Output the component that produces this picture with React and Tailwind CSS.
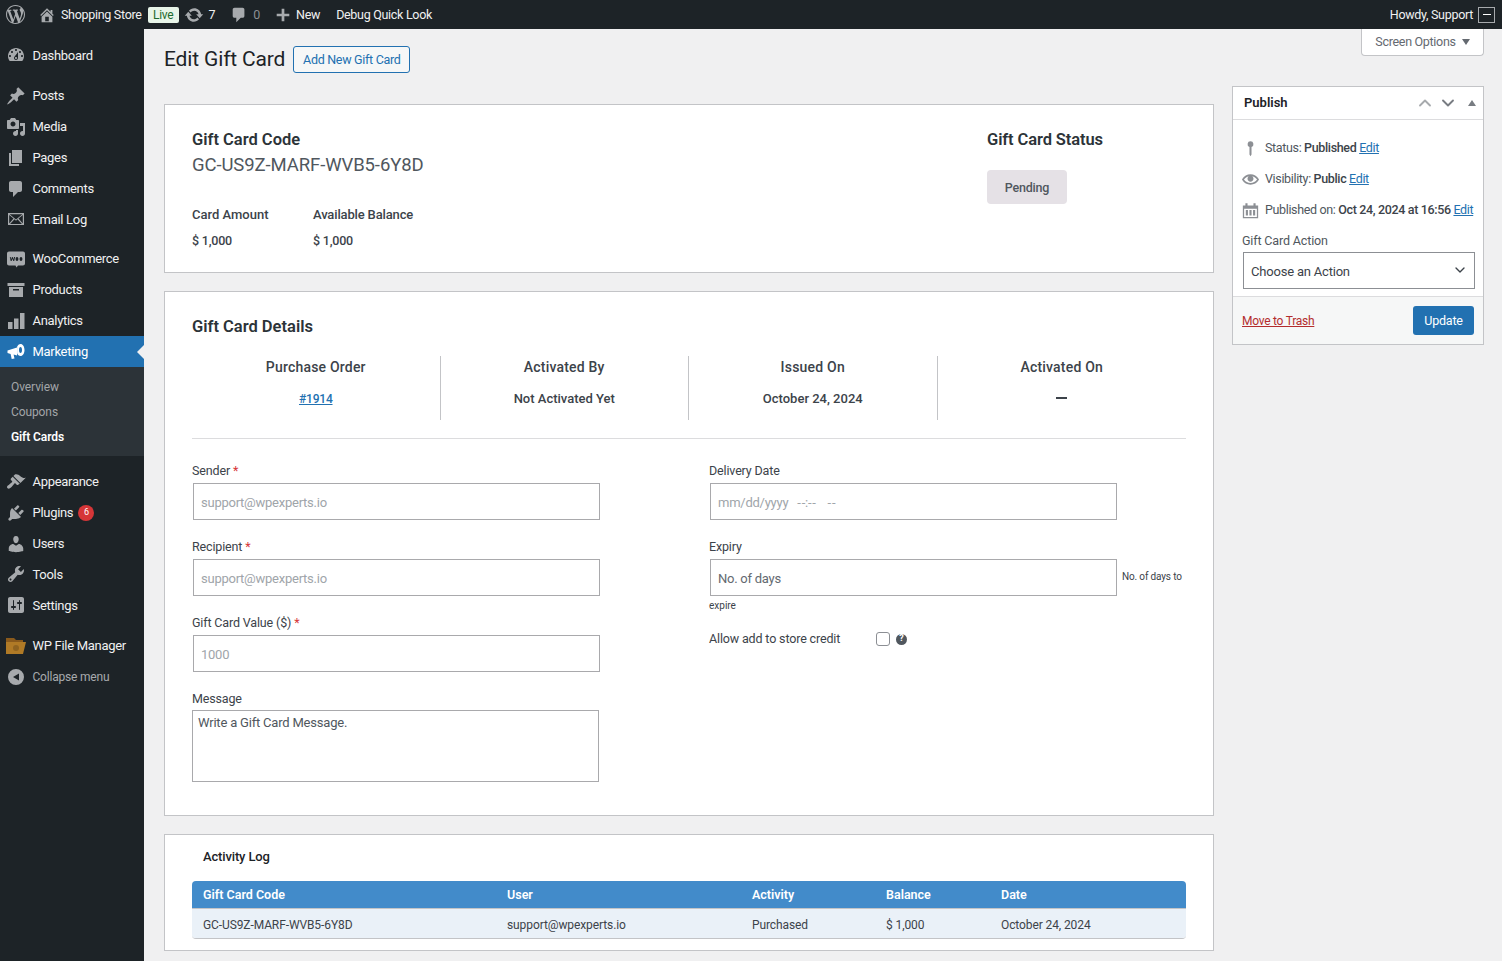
import React from 'react';
import { ChevronUp, ChevronDown } from 'lucide-react';

// dashicons style glyphs, 20x20 box
const paths = {
  wp: 'M20 10c0-5.51-4.49-10-10-10C4.48 0 0 4.49 0 10c0 5.52 4.48 10 10 10 5.51 0 10-4.48 10-10zM7.78 15.37L4.37 6.22c.55-.02 1.17-.08 1.17-.08.5-.06.44-1.13-.06-1.11 0 0-1.45.11-2.37.11-.18 0-.37 0-.58-.01C4.12 2.69 6.87 1.07 10 1.07c2.33 0 4.45.87 6.05 2.34-.68-.11-1.65.39-1.65 1.58 0 .74.45 1.36.9 2.1.35.61.55 1.36.55 2.46 0 1.49-1.4 5-1.4 5l-3.03-8.37c.54-.02.82-.17.82-.17.5-.05.44-1.25-.06-1.22 0 0-1.44.12-2.38.12-.87 0-2.33-.12-2.33-.12-.5-.03-.56 1.2-.06 1.22l.92.08 1.26 3.41zM17.41 10c.24-.64.74-1.87.43-4.25.7 1.29 1.05 2.71 1.05 4.25 0 3.29-1.73 6.24-4.4 7.78.97-2.59 1.94-5.2 2.92-7.78zM6.1 18.09C3.12 16.65 1.11 13.53 1.11 10c0-1.3.23-2.48.72-3.59C3.25 10.3 4.67 14.2 6.1 18.09zm4.03-6.63l2.58 6.98c-.86.29-1.76.45-2.71.45-.79 0-1.57-.11-2.29-.33.81-2.38 1.62-4.74 2.42-7.1z',
  home: 'M16 8.5l1.53 1.53-1.06 1.06L10 4.62l-6.47 6.47-1.06-1.06L10 2.5l4 4v-2h2v4zm-6-2.46l6 5.99V18H4v-5.97zM12 17v-5H8v5h4z',
  update: 'M10.2 3.28c3.53 0 6.43 2.61 6.92 6h2.08l-3.5 4-3.5-4h2.32c-.45-1.97-2.21-3.44-4.32-3.44-1.45 0-2.73.71-3.54 1.78L4.95 5.66C6.23 4.2 8.11 3.28 10.2 3.28zm-.4 13.44c-3.52 0-6.43-2.61-6.92-6H.8l3.5-4c1.17 1.33 2.33 2.67 3.5 4H5.48c.45 1.97 2.21 3.44 4.32 3.44 1.45 0 2.73-.71 3.54-1.78l1.71 1.95c-1.28 1.46-3.15 2.39-5.25 2.39z',
  comment: 'M5 2h9c1.1 0 2 .9 2 2v7c0 1.1-.9 2-2 2h-2l-5 5v-5H5c-1.1 0-2-.9-2-2V4c0-1.1.9-2 2-2z',
  plus: 'M17 8.5v3h-5.5V17h-3v-5.5H3v-3h5.5V3h3v5.5H17z',
  dashboard: 'M3.76 16h12.48c1.1-1.37 1.76-3.11 1.76-5 0-4.42-3.58-8-8-8s-8 3.58-8 8c0 1.89.66 3.63 1.76 5zM10 4c.55 0 1 .45 1 1s-.45 1-1 1-1-.45-1-1 .45-1 1-1zM6 6c.55 0 1 .45 1 1s-.45 1-1 1-1-.45-1-1 .45-1 1-1zm8 0c.55 0 1 .45 1 1s-.45 1-1 1-1-.45-1-1 .45-1 1-1zm-5.37 5.55L12 7v6c0 1.1-.9 2-2 2s-2-.9-2-2c0-.57.24-1.08.63-1.45zM4 10c.55 0 1 .45 1 1s-.45 1-1 1-1-.45-1-1 .45-1 1-1zm12 0c.55 0 1 .45 1 1s-.45 1-1 1-1-.45-1-1 .45-1 1-1zm-5 3c0-.55-.45-1-1-1s-1 .45-1 1 .45 1 1 1 1-.45 1-1z',
  post: 'M10.44 3.02l1.82-1.82 6.36 6.35-1.83 1.82c-1.05-.68-2.48-.57-3.41.36l-.75.75c-.92.93-1.04 2.35-.35 3.41l-1.83 1.82-2.41-2.41-2.8 2.79c-.42.42-3.38 2.71-3.8 2.29s1.86-3.39 2.28-3.81l2.79-2.79L4.1 9.36l1.83-1.82c1.05.69 2.48.57 3.4-.36l.75-.75c.93-.92 1.05-2.35.36-3.41z',
  media: 'M13 11V4c0-.55-.45-1-1-1h-1.67L9 1H5L3.67 3H2c-.55 0-1 .45-1 1v7c0 .55.45 1 1 1h10c.55 0 1-.45 1-1zM7 4.5c1.38 0 2.5 1.12 2.5 2.5S8.38 9.5 7 9.5 4.5 8.38 4.5 7 5.62 4.5 7 4.5zM14 6h5v10.5c0 1.38-1.12 2.5-2.5 2.5S14 17.88 14 16.5s1.12-2.5 2.5-2.5c.17 0 .34.02.5.05V9h-3V6zm-4 8.05V13h2v3.5c0 1.38-1.12 2.5-2.5 2.5S7 17.88 7 16.5 8.12 14 9.5 14c.17 0 .34.02.5.05z',
  page: 'M6 15V2h10v13H6zm-1 1h8v2H3V5h2v11z',
  mail: 'M2 4h16v12H2V4zm1.6 1.2L10 10.4l6.4-5.2H3.6zM3.2 6v8.6l4.3-5.1L3.2 6zm.9 9h11.8l-4.4-4.8L10 11.8l-1.5-1.6L4.1 15zm8.4-5.5l4.3 5.1V6l-4.3 3.5z',
  woo: 'M3 2.5h14c1.1 0 2 .9 2 2v10c0 1.1-.9 2-2 2h-5l-1.5 2-1-2H3c-1.1 0-2-.9-2-2v-10c0-1.1.9-2 2-2zm.8 5.5l.9 4h.9l.9-2.3.8 2.3h.9l.9-4H8l-.5 2.4L6.7 8H6l-.9 2.4L4.7 8h-.9zm7.2 0c-.9 0-1.4.9-1.4 2s.5 2 1.4 2 1.4-.9 1.4-2-.5-2-1.4-2zm4 0c-.9 0-1.4.9-1.4 2s.5 2 1.4 2 1.4-.9 1.4-2-.5-2-1.4-2z',
  products: 'M1.5 3h17v3h-17V3zM3 7h14v10H3V7zm4 2v1.5h6V9H7z',
  analytics: 'M2 11h4.5v7H2v-7zm6-3.5h4.5V18H8V7.5zM14 2h4.5v16H14V2z',
  marketing: 'M1.5 8.5L11 5.5v8l-3.4-.9.9 3.9-2.8.6-1.1-5.2-3.1-.8V8.5zM14.5 2c2.3 0 4 2.6 4 6s-1.7 6-4 6c-1.5 0-2.7-1.1-3.4-2.8V4.8C11.8 3.1 13 2 14.5 2zm0 3c-.9 0-1.5 1.3-1.5 3s.6 3 1.5 3 1.5-1.3 1.5-3-.6-3-1.5-3z',
  appearance: 'M14.48 11.06L7.41 3.99l1.5-1.5c.5-.56 2.3-.47 3.51.32 1.21.8 1.43 1.28 2.91 2.1 1.18.64 2.45 1.26 4.45.85zm-.71.71L6.7 4.7 4.93 6.47c-.39.39-.39 1.02 0 1.41l1.06 1.06c.39.39.39 1.03 0 1.42-.6.6-1.43 1.11-2.21 1.69-.35.26-.7.53-1.01.84C1.43 13.23.4 14.93 1.4 15.94c.1.1.2.2.3.3 1 .99 2.7-.05 4.04-1.38.31-.31.58-.66.84-1.01.58-.78 1.09-1.61 1.69-2.21.39-.39 1.03-.39 1.42 0l1.06 1.06c.39.39 1.02.39 1.41 0z',
  plugins: 'M13.11 4.36L9.87 7.6 8 5.73l3.24-3.24c.35-.34 1.05-.2 1.56.32.52.51.66 1.21.31 1.55zm-8 1.77l.91-1.12 9.01 9.01-1.19.84c-.71.71-2.63 1.16-3.82 1.16H6.14L4.9 17.26c-.59.59-1.54.59-2.12 0-.59-.58-.59-1.53 0-2.12l1.24-1.24v-3.88c0-1.13.4-3.19 1.09-3.89zm7.26 3.97l3.24-3.24c.34-.35 1.04-.21 1.55.31.52.51.66 1.21.31 1.55l-3.24 3.25z',
  users: 'M10 9.25c-2.27 0-2.73-3.44-2.73-3.44C7 4.02 7.82 2 9.97 2c2.16 0 2.98 2.02 2.71 3.81 0 0-.41 3.44-2.68 3.44zm0 2.57L12.72 10c2.39 0 4.52 2.33 4.52 4.53v2.49s-3.65 1.13-7.24 1.13c-3.65 0-7.24-1.13-7.24-1.13v-2.49c0-2.25 1.94-4.48 4.47-4.48z',
  tools: 'M16.68 9.77c-1.34 1.34-3.3 1.67-4.95.99l-5.41 6.52c-.99.99-2.59.99-3.58 0s-.99-2.59 0-3.57l6.52-5.42c-.68-1.65-.35-3.61.99-4.95 1.28-1.28 3.12-1.62 4.72-1.06l-2.89 2.89 2.82 2.82 2.86-2.87c.53 1.58.18 3.39-1.08 4.65zM3.81 16.21c.4.39 1.04.39 1.43 0 .4-.4.4-1.04 0-1.43-.39-.4-1.03-.4-1.43 0-.39.39-.39 1.03 0 1.43z',
  settings: 'M18 16V4c0-1.1-.9-2-2-2H4c-1.1 0-2 .9-2 2v12c0 1.1.9 2 2 2h12c1.1 0 2-.9 2-2zM8 11h1c.55 0 1 .45 1 1s-.45 1-1 1H8v1.5c0 .28-.22.5-.5.5s-.5-.22-.5-.5V13H6c-.55 0-1-.45-1-1s.45-1 1-1h1V5.5c0-.28.22-.5.5-.5s.5.22.5.5V11zm5-2h-1c-.55 0-1-.45-1-1s.45-1 1-1h1V5.5c0-.28.22-.5.5-.5s.5.22.5.5V7h1c.55 0 1 .45 1 1s-.45 1-1 1h-1v5.5c0 .28-.22.5-.5.5s-.5-.22-.5-.5V9z',
  collapse: 'M10 2a8 8 0 1 1 0 16 8 8 0 0 1 0-16zm3 4.5L7 10l6 3.5v-7z',
  eye: 'M19.7 9.4C17.7 6 14 3.9 10 3.9S2.3 6 .3 9.4L0 10l.3.6c2 3.4 5.7 5.5 9.7 5.5s7.7-2.1 9.7-5.5l.3-.6-.3-.6zM10 14.1c-3.1 0-6-1.6-7.7-4.1C3.6 8 5.7 6.6 8 6.1c-.9.6-1.5 1.7-1.5 2.9 0 1.9 1.6 3.5 3.5 3.5s3.5-1.6 3.5-3.5c0-1.2-.6-2.3-1.5-2.9 2.3.5 4.4 1.9 5.7 3.9-1.7 2.5-4.6 4.1-7.7 4.1z',
  pin: 'M10 1.5a3.4 3.4 0 0 1 1.2 6.6V17l-1.2 2-1.2-2V8.1A3.4 3.4 0 0 1 10 1.5z',
  calendar: 'M4 1.5h2.5V4h7V1.5H16V4h3v15H1V4h3V1.5zM2.5 8v9.5h15V8h-15zM4.5 9.5h2.5v6.5H4.5V9.5zm4.25 0h2.5v6.5h-2.5V9.5zm4.25 0h2.5v6.5H13V9.5z',
};

const Dash = ({ name, className }) => (
  <svg viewBox="0 0 20 20" className={className} fill="currentColor" fillRule="evenodd" aria-hidden="true">
    <path d={paths[name]} />
  </svg>
);

const Row = ({ icon, label, children }) => (
  <div className="flex items-center h-[30.8px] text-[#f0f0f1]">
    <Dash name={icon} className="w-5 h-5 ml-[6px] mr-[6.5px] text-[#a7aaad] shrink-0" />
    <span>{label}</span>
    {children}
  </div>
);

const FolderIcon = () => (
  <svg viewBox="0 0 22 18" className="w-[22px] h-[18px] ml-[5px] mr-[5.5px] shrink-0" aria-hidden="true">
    <path d="M1 1h8l2 2h7v3H1z" fill="#8a5a1c" />
    <path d="M1 5h20l-3 12H1z" fill="#b07a26" />
    <circle cx="11" cy="11" r="3" fill="#8f6320" />
  </svg>
);

const Sidebar = () => (
  <aside className="w-[144px] shrink-0 bg-[#1d2327] text-[13px] tracking-[-0.3px]">
    <div className="pt-[11px]">
      <Row icon="dashboard" label="Dashboard" />
    </div>
    <div className="mt-[10px]">
      <Row icon="post" label="Posts" />
      <Row icon="media" label="Media" />
      <Row icon="page" label="Pages" />
      <Row icon="comment" label="Comments" />
      <Row icon="mail" label="Email Log" />
    </div>
    <div className="mt-[9px]">
      <Row icon="woo" label="WooCommerce" />
      <Row icon="products" label="Products" />
      <Row icon="analytics" label="Analytics" />
      <div className="relative flex items-center h-[31px] bg-[#2271b1] text-white">
        <Dash name="marketing" className="w-5 h-5 ml-[6px] mr-[6.5px] shrink-0" />
        <span>Marketing</span>
        <span className="absolute right-0 top-[9px] border-y-[7px] border-r-[7px] border-y-transparent border-r-[#f0f0f1]" />
      </div>
      <div className="bg-[#2c3338] pt-[7px] pb-[7px] text-[12px] tracking-[-0.1px]">
        <div className="h-[25px] flex items-center pl-[11px] text-[#c3c4c7cc]">Overview</div>
        <div className="h-[25px] flex items-center pl-[11px] text-[#c3c4c7cc]">Coupons</div>
        <div className="h-[25px] flex items-center pl-[11px] text-white font-semibold">Gift Cards</div>
      </div>
    </div>
    <div className="mt-[10.5px]">
      <Row icon="appearance" label="Appearance" />
      <Row icon="plugins" label="Plugins">
        <span className="ml-[5px] w-4 h-4 rounded-full bg-[#d63638] text-white text-[9px] flex items-center justify-center">6</span>
      </Row>
      <Row icon="users" label="Users" />
      <Row icon="tools" label="Tools" />
      <Row icon="settings" label="Settings" />
    </div>
    <div className="mt-[10px]">
      <div className="flex items-center h-[30.8px] text-[#f0f0f1]">
        <FolderIcon />
        <span>WP File Manager</span>
      </div>
      <div className="flex items-center h-[32px] text-[#a7aaad] text-[12px] tracking-[-0.2px]">
        <Dash name="collapse" className="w-5 h-5 ml-[6px] mr-[6.5px] shrink-0" />
        <span>Collapse menu</span>
      </div>
    </div>
  </aside>
);

const TopBar = () => (
  <header className="h-[29px] shrink-0 bg-[#1d2327] flex items-center text-[12.5px] tracking-[-0.3px] text-[#f0f0f1]">
    <Dash name="wp" className="w-[19px] h-[19px] ml-[6px] text-[#a7aaad]" />
    <Dash name="home" className="w-[18px] h-[18px] ml-[13px] text-[#a7aaad]" />
    <span className="ml-[5px] pt-px">Shopping Store</span>
    <span className="ml-[6px] w-[31px] h-[16px] rounded-[2px] bg-[#e8f5e9] text-[#1e6b2e] text-[12px] flex items-center justify-center">Live</span>
    <Dash name="update" className="w-[20px] h-[20px] ml-[5px] text-[#a7aaad]" />
    <span className="ml-[5px] pt-px">7</span>
    <Dash name="comment" className="w-[18px] h-[18px] ml-[15px] text-[#a7aaad]" />
    <span className="ml-[5px] pt-px text-[#8c8f94]">0</span>
    <Dash name="plus" className="w-[18px] h-[18px] ml-[14px] text-[#a7aaad]" />
    <span className="ml-[4px] pt-px">New</span>
    <span className="ml-[16px] pt-px">Debug Quick Look</span>
    <span className="ml-auto pt-px">Howdy, Support</span>
    <span className="ml-[5px] mr-[7px] w-[17px] h-[16px] border border-[#a7aaad] flex items-center justify-center">
      <span className="w-[8px] h-px bg-white" />
    </span>
  </header>
);

const Card = ({ className, children }) => (
  <section className={`bg-white border border-[#c3c4c7] ${className}`}>{children}</section>
);

const Field = ({ label, required, placeholder, className = '' }) => (
  <div className={className}>
    <div className="text-[12.5px] tracking-[-0.15px] h-[18px] pt-px leading-[18px] text-[#3c434a]">
      {label}
      {required && <span className="text-[#d63638]"> *</span>}
    </div>
    <input
      readOnly
      placeholder={placeholder}
      className="mt-[4px] ml-px block w-[407px] h-[37px] bg-white border border-[#a9a9ac] px-[7px] pt-px text-[13px] tracking-[-0.25px] placeholder:text-[#a0a5aa] outline-none"
    />
  </div>
);

const StatCol = ({ title, border, children }) => (
  <div className={`h-[64px] flex flex-col items-center pt-[1px] ${border ? 'border-r border-[#c3c4c7]' : ''}`}>
    <div className="h-[20px] leading-[20px] font-medium text-[#3c434a] text-[14px] tracking-[0.2px]">{title}</div>
    <div className="mt-[12px] h-[20px] leading-[20px] text-[#3c434a] text-[13px] font-medium">{children}</div>
  </div>
);

const GiftCardSummary = () => (
  <Card className="h-[169px] pl-[27px] pt-[24px] flex">
    <div className="w-[795px]">
      <h2 className="text-[16.5px] leading-[22px] font-semibold text-[#2c3338]">Gift Card Code</h2>
      <div className="mt-[2px] text-[18.5px] leading-[24px] tracking-[-0.1px] text-[#50575e]">GC-US9Z-MARF-WVB5-6Y8D</div>
      <div className="mt-[29px] flex text-[13px] text-[#3c434a]">
        <div className="w-[121px]">
          <div className="h-[18px] leading-[18px] font-medium">Card Amount</div>
          <div className="mt-[8px] h-[18px] leading-[18px] font-medium text-[12.5px] tracking-[-0.2px]">$ 1,000</div>
        </div>
        <div>
          <div className="h-[18px] leading-[18px] font-medium tracking-[-0.15px]">Available Balance</div>
          <div className="mt-[8px] h-[18px] leading-[18px] font-medium text-[12.5px] tracking-[-0.2px]">$ 1,000</div>
        </div>
      </div>
    </div>
    <div>
      <h2 className="text-[16.5px] leading-[22px] font-semibold tracking-[-0.1px] text-[#2c3338]">Gift Card Status</h2>
      <div className="mt-[19px] w-[80px] h-[34px] pt-[2px] rounded-[4px] bg-[#e5e1e6] text-[#50575e] text-[12.5px] tracking-[-0.2px] font-medium flex items-center justify-center">Pending</div>
    </div>
  </Card>
);

const GiftCardDetails = () => (
  <Card className="h-[525px] px-[27px] pt-[24px]">
    <h2 className="text-[16.5px] leading-[22px] font-semibold text-[#2c3338]">Gift Card Details</h2>
    <div className="mt-[18px] grid grid-cols-4 pb-[18px] border-b border-[#dcdcde]">
      <StatCol title="Purchase Order" border>
        <span className="text-[#2271b1] underline text-[12px] tracking-[-0.2px]">#1914</span>
      </StatCol>
      <StatCol title="Activated By" border>Not Activated Yet</StatCol>
      <StatCol title="Issued On" border>October 24, 2024</StatCol>
      <StatCol title="Activated On">
        <span className="block w-[11px] h-[2px] bg-[#3c434a] mt-[8px]" />
      </StatCol>
    </div>
    <div className="mt-[22px] flex">
      <div className="w-[517px]">
        <Field label="Sender" required placeholder="support@wpexperts.io" />
        <Field label="Recipient" required placeholder="support@wpexperts.io" className="mt-[17px]" />
        <Field label="Gift Card Value ($)" required placeholder="1000" className="mt-[17px]" />
        <div className="mt-[17px]">
          <div className="text-[12.5px] tracking-[-0.15px] h-[18px] pt-px leading-[18px] text-[#3c434a]">Message</div>
          <textarea
            readOnly
            placeholder="Write a Gift Card Message."
            className="block w-[407px] h-[72px] mt-[3px] border border-[#a9a9ac] px-[5px] py-[2px] text-[13px] tracking-[-0.2px] placeholder:text-[#50575e] outline-none resize-none"
          />
        </div>
      </div>
      <div className="flex-1">
        <Field label="Delivery Date" placeholder={'mm/dd/yyyy\u00a0\u00a0\u00a0-\u200a-:-\u200a-\u00a0\u00a0\u00a0\u00a0-\u200a-'} />
        <div className="mt-[17px]">
          <div className="text-[12.5px] tracking-[-0.15px] h-[18px] pt-px leading-[18px] text-[#3c434a]">Expiry</div>
          <div className="mt-[4px] flex items-center">
            <input
              readOnly
              placeholder="No. of days"
              className="ml-px block w-[407px] h-[37px] border border-[#a9a9ac] px-[7px] pt-px text-[13px] tracking-[-0.25px] placeholder:text-[#646970] outline-none"
            />
            <span className="ml-[5px] mb-[2px] text-[10px] tracking-[-0.15px] text-[#3c434a]">No. of days to</span>
          </div>
          <div className="mt-[3px] text-[10px] leading-[14px] text-[#3c434a]">expire</div>
        </div>
        <div className="mt-[17px] flex items-center h-[18px] text-[12.5px] tracking-[-0.15px] text-[#3c434a]">
          <span className="w-[167px]">Allow add to store credit</span>
          <input type="checkbox" className="w-[14px] h-[14px] appearance-none bg-white border border-[#8c8f94] rounded-[3px]" />
          <span className="ml-[6px] w-[11px] h-[11px] rounded-full bg-[#50575e] text-white text-[9px] font-bold flex items-center justify-center">?</span>
        </div>
      </div>
    </div>
  </Card>
);

const logCols = 'grid grid-cols-[304px_245px_134px_115px_1fr] pl-[11px] items-center';

const ActivityLog = () => (
  <Card className="h-[117px] px-[27px] pt-[12px]">
    <h3 className="ml-[11px] text-[13px] tracking-[-0.15px] leading-[20px] font-medium text-[#1d2327]">Activity Log</h3>
    <div className="mt-[14px] rounded-[4px] overflow-hidden border-b border-[#c3c4c7]">
      <div className={`${logCols} h-[28px] pt-[2px] text-[12.5px] bg-[#428bca] text-white font-semibold border-b border-[#c3c4c7]`}>
        <span>Gift Card Code</span>
        <span>User</span>
        <span>Activity</span>
        <span>Balance</span>
        <span>Date</span>
      </div>
      <div className={`${logCols} h-[29px] pt-[2px] text-[12px] tracking-[-0.1px] bg-[#eaf1f8] text-[#3c434a]`}>
        <span>GC-US9Z-MARF-WVB5-6Y8D</span>
        <span>support@wpexperts.io</span>
        <span>Purchased</span>
        <span>$ 1,000</span>
        <span>October 24, 2024</span>
      </div>
    </div>
  </Card>
);

const PublishLine = ({ icon, iconClass, children }) => (
  <div className="flex items-center h-[31px] text-[12.5px] tracking-[-0.35px] text-[#50575e] whitespace-nowrap">
    <span className="w-[23px] shrink-0 flex items-center justify-center -ml-[3px] mr-[3px]">
      <Dash name={icon} className={iconClass} />
    </span>
    <span>{children}</span>
  </div>
);

const PublishBox = () => (
  <Card className="mt-[30px] h-[259px] flex flex-col">
    <div className="h-[33px] shrink-0 border-b border-[#dcdcde] flex items-center pl-[11px] text-[#1d2327]">
      <span className="text-[13px] font-semibold">Publish</span>
      <ChevronUp className="ml-auto w-5 h-5 text-[#a7aaad]" strokeWidth={2.25} />
      <ChevronDown className="ml-[3px] w-5 h-5 text-[#787c82]" strokeWidth={2.25} />
      <span className="ml-[10px] mr-[7px] border-x-[4px] border-b-[6px] border-x-transparent border-b-[#787c82]" />
    </div>
    <div className="flex-1 px-[9px] pt-[13px]">
      <PublishLine icon="pin" iconClass="w-[17px] h-[17px] text-[#8c8f94]">
        Status: <b className="font-medium text-[#3c434a]">Published</b> <a className="text-[#2271b1] underline">Edit</a>
      </PublishLine>
      <PublishLine icon="eye" iconClass="w-[17px] h-[17px] text-[#8c8f94]">
        Visibility: <b className="font-medium text-[#3c434a]">Public</b> <a className="text-[#2271b1] underline">Edit</a>
      </PublishLine>
      <PublishLine icon="calendar" iconClass="w-[17px] h-[17px] text-[#8c8f94]">
        Published on: <b className="font-medium text-[#3c434a]">Oct 24, 2024 at 16:56</b> <a className="text-[#2271b1] underline">Edit</a>
      </PublishLine>
      <div className="mt-[6px] h-[18px] leading-[18px] text-[12.5px] tracking-[-0.15px] text-[#50575e]">Gift Card Action</div>
      <div className="relative mt-[2px] ml-px w-[232px]">
        <select className="block w-full h-[37px] appearance-none bg-white border border-[#8c8f94] pl-[7px] pt-[2px] text-[13px] tracking-[-0.2px] text-[#3c434a] outline-none">
          <option>Choose an Action</option>
        </select>
        <ChevronDown className="absolute right-[7px] top-[10px] w-4 h-4 text-[#3c434a] pointer-events-none" strokeWidth={2} />
      </div>
    </div>
    <div className="h-[48px] shrink-0 bg-[#f6f7f7] border-t border-[#dcdcde] flex items-center justify-between pl-[9px] pr-[9px]">
      <a className="text-[12px] tracking-[-0.25px] text-[#b32d2e] underline">Move to Trash</a>
      <button className="w-[61px] h-[29px] pt-px bg-[#2271b1] rounded-[3px] text-white text-[12.5px] tracking-[-0.2px]">Update</button>
    </div>
  </Card>
);

export default function App() {
  return (
    <div className="h-[961px] overflow-hidden flex flex-col bg-[#f0f0f1] font-['Roboto','Noto_Sans',sans-serif]">
      <TopBar />
      <div className="flex flex-1 min-h-0">
        <Sidebar />
        <main className="flex-1 flex pl-5 pr-[18px] gap-[18px] min-w-0">
          <div className="w-[1050px] shrink-0 pt-[17px]">
            <div className="h-[27px] flex items-center">
              <h1 className="pt-px text-[21px] tracking-[-0.15px] text-[#1d2327]">Edit Gift Card</h1>
              <button className="ml-[8px] w-[117px] h-[27px] pt-px border border-[#2271b1] rounded-[3px] bg-[#f6f7f7] text-[#2271b1] text-[12.5px] tracking-[-0.3px]">Add New Gift Card</button>
            </div>
            <div className="mt-[31px] flex flex-col gap-[18px]">
              <GiftCardSummary />
              <GiftCardDetails />
              <ActivityLog />
            </div>
          </div>
          <div className="w-[252px] shrink-0">
            <div className="flex justify-end">
              <div className="w-[123px] h-[27px] bg-white border border-t-0 border-[#c3c4c7] rounded-b-[4px] flex items-center justify-center text-[12.5px] tracking-[-0.3px] text-[#646970]">
                Screen Options
                <span className="ml-[6px] mt-[-1px] border-x-[4px] border-t-[6px] border-x-transparent border-t-[#646970]" />
              </div>
            </div>
            <PublishBox />
          </div>
        </main>
      </div>
    </div>
  );
}
